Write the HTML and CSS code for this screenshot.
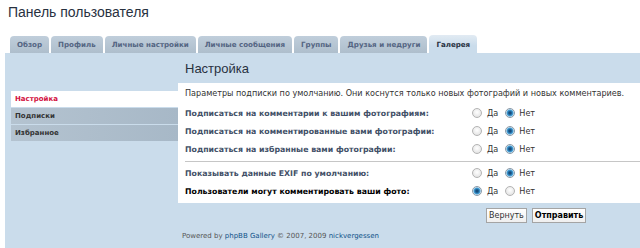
FILE: index.html
```html
<!DOCTYPE html>
<html lang="ru">
<head>
    <meta charset="UTF-8">
    <title>Панель пользователя</title>
    <link rel="stylesheet" href="styles.css">
</head>
<body>
<h2 class="page-title">Панель пользователя</h2>

<ul class="tabs">
    <li><a href="#">Обзор</a></li>
    <li><a href="#">Профиль</a></li>
    <li><a href="#">Личные настройки</a></li>
    <li><a href="#">Личные сообщения</a></li>
    <li><a href="#">Группы</a></li>
    <li><a href="#">Друзья и недруги</a></li>
    <li class="active"><a href="#">Галерея</a></li>
</ul>

<div class="panel">
    <div class="cp-layout">
        <ul class="cp-menu">
            <li class="active"><a href="#">Настройка</a></li>
            <li><a href="#">Подписки</a></li>
            <li><a href="#">Избранное</a></li>
        </ul>

        <div class="cp-main">
            <h3 class="cp-title">Настройка</h3>
            <form class="cp-box">
                <p class="desc">Параметры подписки по умолчанию. Они коснутся только новых фотографий и новых комментариев.</p>

                <div class="row">
                    <label>Подписаться на комментарии к вашим фотографиям:</label>
                    <div class="choice">
                        <input type="radio" name="s1" value="1"> <span>Да</span>
                        <input type="radio" name="s1" value="0" checked> <span>Нет</span>
                    </div>
                </div>
                <div class="row">
                    <label>Подписаться на комментированные вами фотографии:</label>
                    <div class="choice">
                        <input type="radio" name="s2" value="1"> <span>Да</span>
                        <input type="radio" name="s2" value="0" checked> <span>Нет</span>
                    </div>
                </div>
                <div class="row">
                    <label>Подписаться на избранные вами фотографии:</label>
                    <div class="choice">
                        <input type="radio" name="s3" value="1"> <span>Да</span>
                        <input type="radio" name="s3" value="0" checked> <span>Нет</span>
                    </div>
                </div>

                <hr class="sep">

                <div class="row">
                    <label>Показывать данные EXIF по умолчанию:</label>
                    <div class="choice">
                        <input type="radio" name="s4" value="1"> <span>Да</span>
                        <input type="radio" name="s4" value="0" checked> <span>Нет</span>
                    </div>
                </div>
                <div class="row">
                    <label class="strong">Пользователи могут комментировать ваши фото:</label>
                    <div class="choice">
                        <input type="radio" name="s5" value="1" checked> <span>Да</span>
                        <input type="radio" name="s5" value="0"> <span>Нет</span>
                    </div>
                </div>
            </form>

            <div class="actions">
                <button type="reset" class="btn">Вернуть</button>
                <button type="submit" class="btn btn-main">Отправить</button>
            </div>
        </div>
    </div>

    <div class="copyright">
        Powered by <a href="#">phpBB Gallery</a> &copy; 2007, 2009 <a href="#">nickvergessen</a>
    </div>
</div>
</body>
</html>
```

FILE: styles.css
```css
body {
    margin: 0;
    font-family: "DejaVu Sans", Verdana, sans-serif;
    font-size: 8.1px;
    color: #333;
    background-color: #fff;
}
a {
    text-decoration: none;
}
.page-title {
    margin: 0;
    padding: 3px 0 0 8px;
    height: 30px;
    font-family: "Liberation Sans", Arial, sans-serif;
    font-size: 14px;
    font-weight: normal;
    line-height: 18px;
    color: #28313f;
}

/* tabs */
.tabs {
    list-style: none;
    margin: 0;
    padding: 0 0 0 10px;
    display: flex;
    align-items: flex-end;
    gap: 2px;
    height: 20px;
}
.tabs li a {
    display: block;
    height: 17px;
    padding: 0 7px;
    line-height: 17px;
    font-size: 7.1px;
    font-weight: bold;
    color: #536482;
    background: linear-gradient(#c0cedb, #aebecc);
    border-radius: 4px 4px 0 0;
}
.tabs li.active a {
    height: 18px;
    line-height: 19px;
    color: #28313f;
    background: linear-gradient(#e2ebf3, #cadceb 60%);
}

/* main panel */
.panel {
    margin-left: 5px;
    background-color: #cadceb;
    padding-bottom: 5px;
}
.cp-layout {
    display: flex;
}
.cp-menu {
    list-style: none;
    margin: 38px 0 0 6px;
    padding: 0;
    width: 167px;
}
.cp-menu li a {
    display: block;
    height: 16px;
    line-height: 16px;
    padding-left: 4px;
    margin-bottom: 1px;
    font-size: 7px;
    font-weight: bold;
    color: #333;
    background: linear-gradient(90deg, #b4c3d0, #a7b8c7);
}
.cp-menu li.active a {
    background: #fff;
    color: #d31141;
}
.cp-main {
    flex: 1;
}
.cp-title {
    margin: 0;
    padding: 7px 0 0 7px;
    height: 23px;
    font-family: "Liberation Sans", Arial, sans-serif;
    font-size: 13px;
    font-weight: normal;
    line-height: 18px;
    color: #28313f;
}
.cp-box {
    background-color: #fff;
    padding: 3px 0 3px 7px;
}
.desc {
    margin: 0 0 4px;
    line-height: 14px;
    color: #333;
}
.row {
    display: flex;
    align-items: center;
    height: 18px;
}
.row label {
    width: 287px;
    font-size: 7.8px;
    font-weight: bold;
    color: #425067;
}
.row label.strong {
    color: #000;
}
.choice {
    display: flex;
    align-items: center;
    color: #333;
}
.choice span {
    margin: 0 7px 0 5px;
}
.choice span:last-child {
    margin-left: 4px;
}
.choice input {
    appearance: none;
    -webkit-appearance: none;
    width: 10px;
    height: 10px;
    margin: 0;
    border: 1px solid #b3b3b3;
    border-radius: 50%;
    background: radial-gradient(circle at 50% 40%, #fff, #dcdcdc);
}
.choice input:checked {
    border-color: #8a9aa8;
    background: radial-gradient(circle, #0e3f6b 0, #1d5e92 1.5px, #47a3da 3px, #e9eef2 4px);
}
.sep {
    margin: 3px 0 2px;
    border: 0;
    border-top: 1px solid #c6c6c6;
}

/* buttons */
.actions {
    display: flex;
    gap: 5px;
    padding: 5px 0 0 308px;
    height: 15px;
}
.btn {
    height: 15px;
    padding: 0 2px;
    font-family: "DejaVu Sans", Verdana, sans-serif;
    font-size: 8px;
    color: #333;
    background: linear-gradient(#fff, #efefef);
    border: 1px solid #a4a4a4;
    border-radius: 0;
}
.btn-main {
    font-weight: bold;
    color: #000;
}
.copyright {
    padding: 6px 0 0 177px;
    height: 15px;
    font-size: 7px;
    line-height: 15px;
    color: #555;
}
.copyright a {
    color: #105289;
}
```
